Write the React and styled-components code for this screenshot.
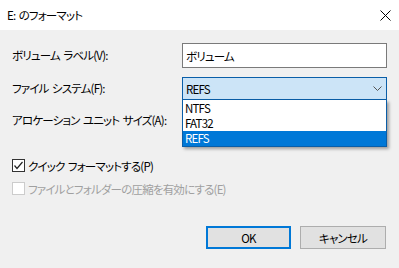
import React from "react";
import styled, { createGlobalStyle } from "styled-components";

const Global = createGlobalStyle`
  html, body { margin: 0; padding: 0; background: #f0f0f0; }
  body {
    font-family: "Noto Sans CJK JP", "Noto Sans", sans-serif;
    font-size: 11.5px;
    letter-spacing: -0.8px;
    word-spacing: 1.5px;
    color: #000;
    font-feature-settings: "palt";
  }
  * { box-sizing: border-box; }
`;

const Window = styled.div`
  width: 399px;
  height: 268px;
  display: flex;
  flex-direction: column;
  background: #f0f0f0;
  overflow: hidden;
`;

const TitleBar = styled.div`
  height: 30px;
  flex: none;
  background: #fff;
  display: flex;
  align-items: center;
  justify-content: space-between;
  padding: 0 8px 0 7px;
`;

const Title = styled.span`
  line-height: 1;
  margin-top: 1px;
`;

const Close = styled.svg`
  width: 11px;
  height: 11px;
  display: block;
`;

const Body = styled.div`
  padding: 13px 12px 0 12px;
  display: flex;
  flex-direction: column;
`;

const Form = styled.div`
  display: grid;
  grid-template-columns: 170px 1fr;
  row-gap: 9px;
  align-items: center;
`;

const Label = styled.div`
  line-height: 1;
  white-space: nowrap;
`;

const TextBox = styled.div`
  height: 25px;
  border: 1px solid #7a7a7a;
  background: #fff;
  display: flex;
  align-items: center;
  padding-left: 3px;
`;

const ComboWrap = styled.div`
  position: relative;
  height: 23px;
`;

const Combo = styled.div`
  height: 23px;
  border: 1px solid ${(p) => (p.$open ? "#0a5ea8" : "#adadad")};
  background: ${(p) => (p.$open ? "#cce4f7" : "#e1e1e1")};
  display: flex;
  align-items: center;
  justify-content: space-between;
  padding: 0 4px 0 3px;
`;

const Chevron = styled.svg`
  width: 9px;
  height: 5px;
  display: block;
`;

const List = styled.div`
  position: absolute;
  left: 0;
  right: 0;
  top: 100%;
  background: #fff;
  border: 1px solid #0a5ea8;
  border-top: none;
  padding-top: 1px;
  box-shadow: 2px 2px 3px rgba(0, 0, 0, 0.35);
  z-index: 2;
`;

const Item = styled.div`
  height: 15px;
  line-height: 15px;
  padding-left: 2px;
  background: ${(p) => (p.$selected ? "#0078d7" : "transparent")};
  color: ${(p) => (p.$selected ? "#fff" : "#000")};
`;

const Checks = styled.div`
  margin-top: 22px;
  display: flex;
  flex-direction: column;
`;

const CheckRow = styled.div`
  height: 23px;
  display: flex;
  align-items: center;
  gap: 3px;
  color: ${(p) => (p.$disabled ? "#a0a0a0" : "#000")};
`;

const Box = styled.span`
  width: 13px;
  height: 13px;
  border: 1px solid ${(p) => (p.$disabled ? "#cccccc" : "#333333")};
  background: #fff;
  display: flex;
  align-items: center;
  justify-content: center;
  flex: none;
`;

const Buttons = styled.div`
  margin-top: 26px;
  display: flex;
  justify-content: flex-end;
  gap: 9px;
  padding-right: 1px;
`;

const Button = styled.div`
  width: ${(p) => p.$w}px;
  height: 23px;
  background: #e1e1e1;
  border: ${(p) => (p.$default ? "2px solid #0078d7" : "1px solid #adadad")};
  display: flex;
  align-items: center;
  justify-content: center;
`;

export default function App() {
  return (
    <>
      <Global />
      <Window>
        <TitleBar>
          <Title>E: のフォーマット</Title>
          <Close viewBox="0 0 11 11">
            <path d="M0.5 0.5 L10.5 10.5 M10.5 0.5 L0.5 10.5" stroke="#000" strokeWidth="1" />
          </Close>
        </TitleBar>
        <Body>
          <Form>
            <Label>ボリューム ラベル(V):</Label>
            <TextBox>ボリューム</TextBox>
            <Label>ファイル システム(F):</Label>
            <ComboWrap>
              <Combo $open>
                <span>REFS</span>
                <Chevron viewBox="0 0 9 5">
                  <path d="M0.5 0.5 L4.5 4.5 L8.5 0.5" fill="none" stroke="#555" strokeWidth="1" />
                </Chevron>
              </Combo>
              <List>
                <Item>NTFS</Item>
                <Item>FAT32</Item>
                <Item $selected>REFS</Item>
              </List>
            </ComboWrap>
            <Label>アロケーション ユニット サイズ(A):</Label>
            <ComboWrap>
              <Combo />
            </ComboWrap>
          </Form>
          <Checks>
            <CheckRow>
              <Box>
                <svg width="11" height="11" viewBox="0 0 11 11">
                  <path d="M1.5 5.5 L4 8.5 L9.5 2" fill="none" stroke="#222" strokeWidth="1.2" />
                </svg>
              </Box>
              クイック フォーマットする(P)
            </CheckRow>
            <CheckRow $disabled>
              <Box $disabled />
              ファイルとフォルダーの圧縮を有効にする(E)
            </CheckRow>
          </Checks>
          <Buttons>
            <Button $w={85} $default>OK</Button>
            <Button $w={86}>キャンセル</Button>
          </Buttons>
        </Body>
      </Window>
    </>
  );
}
